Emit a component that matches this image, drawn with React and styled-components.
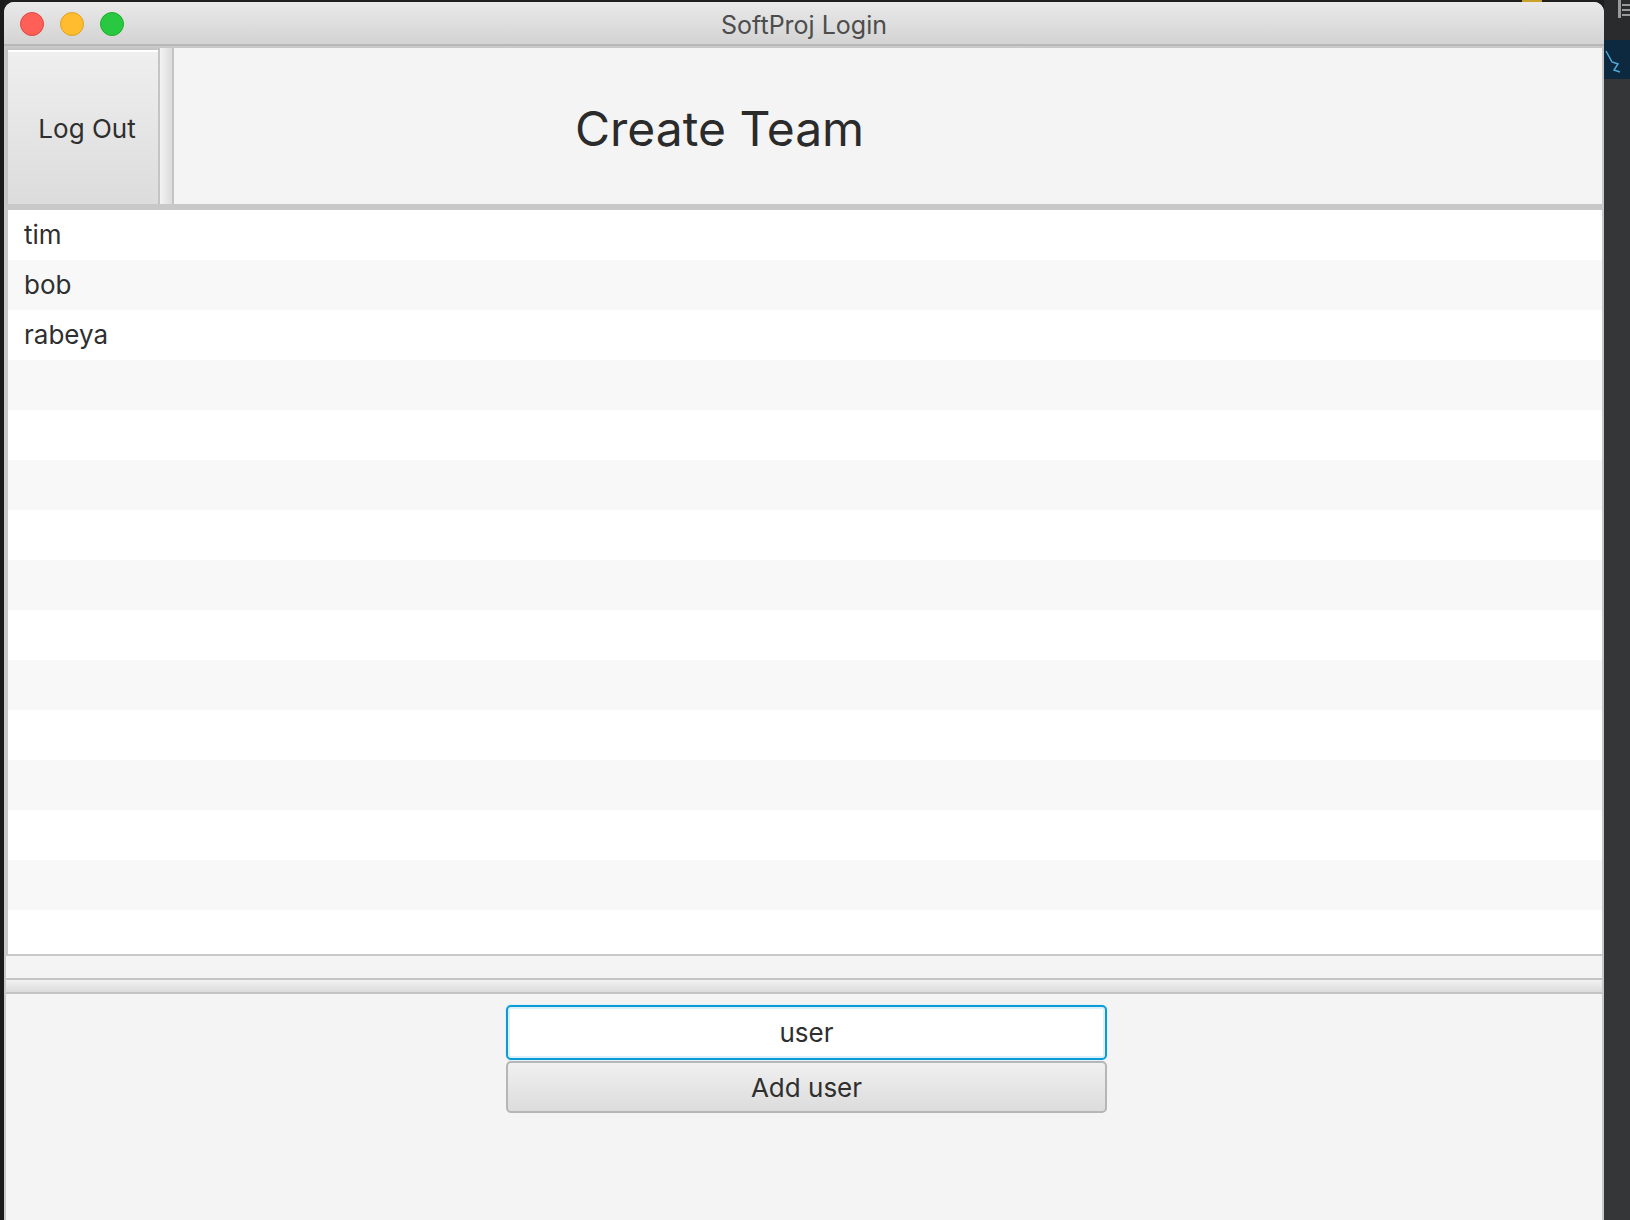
import styled, { createGlobalStyle } from 'styled-components'

const GlobalStyle = createGlobalStyle`
  html, body {
    margin: 0;
    padding: 0;
    background: #1e1e1e;
    overflow: hidden;
  }
  * {
    box-sizing: border-box;
  }
`

const Desk = styled.div`
  display: flex;
  width: 1630px;
  height: 1220px;
  background: #1e1e1e;
  font-family: Inter, 'Liberation Sans', sans-serif;
  overflow: hidden;
`

const LeftEdge = styled.div`
  width: 4px;
  background: #1b1b1b;
`

const WindowColumn = styled.div`
  display: flex;
  flex-direction: column;
  width: 1600px;
`

const TopStrip = styled.div`
  display: flex;
  height: 2px;
  background: #1e1e1e;
`

const Mark = styled.div`
  margin-left: 1518px;
  width: 20px;
  background: #c9a227;
`

const Window = styled.div`
  flex: 1;
  display: flex;
  flex-direction: column;
  border-radius: 10px 10px 0 0;
  overflow: hidden;
  background: #f4f4f4;
`

const TitleBar = styled.div`
  position: relative;
  height: 44px;
  display: flex;
  align-items: center;
  justify-content: center;
  padding-top: 4px;
  background: linear-gradient(#e9e9e9, #d3d3d3);
  border-bottom: 2px solid #b8b8b8;
  color: #4d4d4d;
  font-size: 25px;
`

const Lights = styled.div`
  position: absolute;
  left: 16px;
  top: 10px;
  display: flex;
  gap: 16px;
`

const Light = styled.span`
  width: 24px;
  height: 24px;
  border-radius: 50%;
  background: ${p => p.$fill};
  border: 1px solid ${p => p.$edge};
`

const Body = styled.div`
  flex: 1;
  display: flex;
  flex-direction: column;
  border-left: 2px solid #c8c8c8;
  border-right: 2px solid #c8c8c8;
  border-top: 2px solid #c8c8c8;
`

const Header = styled.div`
  display: flex;
  height: 156px;
  border-bottom: 6px solid #c8c8c8;
  box-sizing: content-box;
`

const LogOutButton = styled.button`
  width: 154px;
  height: 100%;
  border: 2px solid #c4c4c4;
  border-bottom: none;
  box-shadow: inset 0 2px 0 #ffffff;
  background: linear-gradient(#efefef, #dcdcdc);
  font-family: inherit;
  font-size: 26px;
  color: #2f2f2f;
  padding: 3px 0 0 8px;
`

const Splitter = styled.div`
  width: 14px;
  background: linear-gradient(to right, #f3f3f3, #dcdcdc);
  border-right: 2px solid #c4c4c4;
`

const TitleArea = styled.div`
  flex: 1;
  display: flex;
  align-items: center;
  padding: 4px 0 0 401px;
  font-size: 48px;
  color: #2b2b2b;
`

const List = styled.div`
  height: 746px;
  display: flex;
  flex-direction: column;
  overflow: hidden;
  border-left: 2px solid #c8c8c8;
  border-bottom: 2px solid #c8c8c8;
  background: #fff;
`

const Row = styled.div`
  flex: 0 0 50px;
  display: flex;
  align-items: center;
  padding: 0 0 1px 16px;
  font-size: 26px;
  color: #2f2f2f;
  background: ${p => (p.$odd ? '#f8f8f8' : '#ffffff')};
`

const Gap = styled.div`
  height: 22px;
`

const Divider = styled.div`
  height: 16px;
  border-top: 2px solid #c4c4c4;
  border-bottom: 2px solid #c4c4c4;
  background: linear-gradient(#f2f2f2, #dcdcdc);
`

const Form = styled.div`
  display: flex;
  flex-direction: column;
  align-items: center;
  gap: 1px;
  padding: 11px 0 0 5px;
`

const Field = styled.div`
  width: 601px;
  height: 55px;
  display: flex;
  align-items: center;
  justify-content: center;
  background: #fff;
  border: 2px solid #0b9bd6;
  border-radius: 5px;
  box-shadow: inset 0 0 0 2px #dcf0fa, 0 0 0 1px #e2f1f8;
  font-size: 26px;
  color: #2f2f2f;
`

const AddButton = styled.button`
  width: 601px;
  height: 52px;
  border: 2px solid #b6b6b6;
  border-radius: 5px;
  background: linear-gradient(#f0f0f0, #dcdcdc);
  font-family: inherit;
  font-size: 26px;
  color: #2f2f2f;
`

const Dock = styled.div`
  flex: 1;
  display: flex;
  flex-direction: column;
  background: #343638;
`

const DockTop = styled.div`
  height: 40px;
  background: #2a2b2d;
  display: flex;
  justify-content: flex-end;
`

const DockBand = styled.div`
  height: 39px;
  background: #0c2940;
`

const names = ['tim', 'bob', 'rabeya']

export default function App() {
  const rows = Array.from({ length: 15 }, (_, i) => names[i] || '')

  return (
    <Desk>
      <GlobalStyle />
      <LeftEdge />
      <WindowColumn>
        <TopStrip>
          <Mark />
        </TopStrip>
        <Window>
          <TitleBar>
            <Lights>
              <Light $fill='#fe5f57' $edge='#e2463f' />
              <Light $fill='#febc2e' $edge='#dfa123' />
              <Light $fill='#28c840' $edge='#1dad2b' />
            </Lights>
            SoftProj Login
          </TitleBar>
          <Body>
            <Header>
              <LogOutButton>Log Out</LogOutButton>
              <Splitter />
              <TitleArea>Create Team</TitleArea>
            </Header>
            <List>
              {rows.map((name, i) => (
                <Row key={i} $odd={i % 2 === 1}>
                  {name}
                </Row>
              ))}
            </List>
            <Gap />
            <Divider />
            <Form>
              <Field>user</Field>
              <AddButton>Add user</AddButton>
            </Form>
          </Body>
        </Window>
      </WindowColumn>
      <Dock>
        <DockTop>
          <svg width='14' height='24' viewBox='0 0 14 24'>
            <rect x='2' y='0' width='3' height='18' fill='#9a9a9a' />
            <rect x='6' y='4' width='8' height='2' fill='#9a9a9a' />
            <rect x='6' y='9' width='8' height='2' fill='#9a9a9a' />
            <rect x='6' y='14' width='8' height='2' fill='#9a9a9a' />
          </svg>
        </DockTop>
        <DockBand>
          <svg width='26' height='39' viewBox='0 0 26 39'>
            <polyline points='2,11 8,22 14,24 10,30 16,32' fill='none' stroke='#4fa8d8' strokeWidth='1.5' />
          </svg>
        </DockBand>
      </Dock>
    </Desk>
  )
}
